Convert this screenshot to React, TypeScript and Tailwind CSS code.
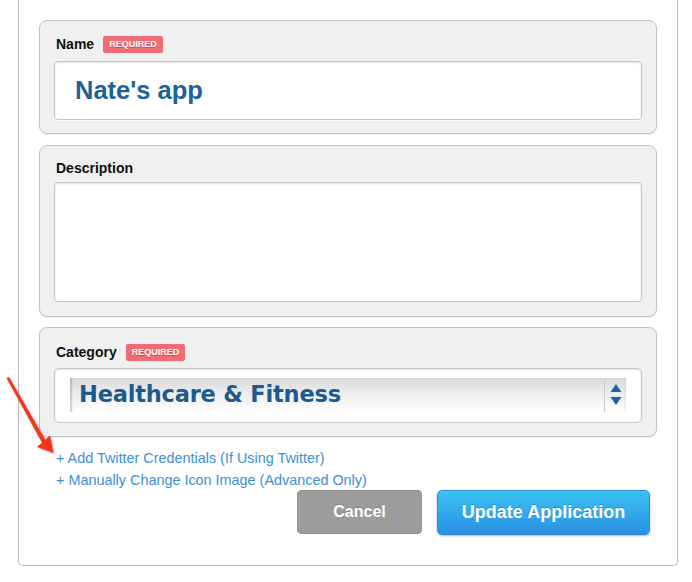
import React from "react";

function Badge() {
  return (
    <span className="ml-[9px] inline-flex h-[17px] items-center rounded-[2px] bg-[#f06c74] px-[6px] text-[9px] font-bold leading-none text-white [text-shadow:0_1px_0_rgba(150,30,40,0.45)]">
      REQUIRED
    </span>
  );
}

function Card({ children, className }: { children: React.ReactNode; className: string }) {
  return (
    <div
      className={
        "rounded-[8px] border border-[#c3c3c3] bg-[#f0f0f0] px-[14px] shadow-[0_1px_1px_rgba(0,0,0,0.06)] " +
        className
      }
    >
      {children}
    </div>
  );
}

export default function App() {
  return (
    <div className="relative h-[582px] w-[692px] bg-white font-['Liberation_Sans',Arial,sans-serif]">
      <div className="ml-[18px] h-[566px] w-[660px] rounded-b-[5px] border-x border-b border-[#b8b8b8] px-[20px] pt-[20px]">
        {/* Name */}
        <Card className="pt-[15px] pb-[13px]">
          <div className="flex h-[16px] items-center pl-[2px]">
            <span className="text-[14px] font-bold text-[#111]">Name</span>
            <Badge />
          </div>
          <div className="mt-[9px] flex h-[59px] items-center rounded-[4px] border border-[#c6c6c6] bg-white pl-[20px] shadow-[inset_0_1px_2px_rgba(0,0,0,0.12),0_1px_0_rgba(255,255,255,0.8)]">
            <span className="text-[25.5px] font-bold text-[#1c6399]">Nate's app</span>
          </div>
        </Card>

        {/* Description */}
        <Card className="mt-[11px] pt-[14px] pb-[14px]">
          <div className="flex h-[16px] items-center pl-[2px]">
            <span className="text-[14px] font-bold text-[#111]">Description</span>
          </div>
          <div className="mt-[6px] h-[120px] rounded-[4px] border border-[#c6c6c6] bg-white shadow-[inset_0_1px_2px_rgba(0,0,0,0.12)]" />
        </Card>

        {/* Category */}
        <Card className="mt-[10px] pt-[16px] pb-[13px]">
          <div className="flex h-[16px] items-center pl-[2px]">
            <span className="text-[14px] font-bold text-[#111]">Category</span>
            <Badge />
          </div>
          <div className="mt-[8px] h-[55px] rounded-[5px] border border-[#c6c6c6] bg-white px-[15px] pt-[9px] shadow-[inset_0_1px_2px_rgba(0,0,0,0.12)]">
            <div className="flex h-[34px] items-center bg-[linear-gradient(to_bottom,#dadada,#ececec_45%,#fafafa_85%,#ffffff)] shadow-[inset_3px_0_2px_-1px_rgba(0,0,0,0.18),inset_-3px_0_3px_-2px_rgba(0,0,0,0.08)]">
              <span className="flex-1 pl-[9px] font-['DejaVu_Sans',sans-serif] text-[22.5px] font-bold tracking-[-0.2px] text-[#1d5b8f]">
                Healthcare &amp; Fitness
              </span>
              <div className="flex h-full w-[22px] items-center justify-center border-l border-[#cbcbcb]">
                <svg width="12" height="22" viewBox="0 0 12 22">
                  <path d="M6 0 L11.5 8 L0.5 8 Z" fill="#1f65a2" />
                  <path d="M0.5 13 L11.5 13 L6 21 Z" fill="#1f65a2" />
                </svg>
              </div>
            </div>
          </div>
        </Card>

        {/* Links */}
        <div className="mt-[10px] pl-[17px] text-[14.4px] leading-[22px] text-[#3d8fd8]">
          <div>+ Add Twitter Credentials (If Using Twitter)</div>
          <div>+ Manually Change Icon Image (Advanced Only)</div>
        </div>

        {/* Buttons */}
        <div className="mt-[-1px] flex justify-end gap-[15px] pr-[7px]">
          <button className="h-[44px] w-[125px] rounded-[4px] border border-[#939393] bg-[#9c9c9c] text-[16px] font-bold text-white [text-shadow:0_-1px_0_rgba(0,0,0,0.15)]">
            Cancel
          </button>
          <button className="h-[45px] w-[213px] rounded-[5px] border border-[#2c8ad6] bg-[linear-gradient(to_bottom,#3ac3f3,#2b8fe2)] text-[18px] font-bold text-white shadow-[0_1px_2px_rgba(0,0,0,0.3)] [text-shadow:0_-1px_0_rgba(0,60,120,0.3)]">
            Update Application
          </button>
        </div>
      </div>

      {/* Red annotation arrow */}
      <svg className="absolute left-0 top-[370px]" width="70" height="95" viewBox="0 370 70 95">
        <defs>
          <filter id="sh" x="-30%" y="-30%" width="160%" height="160%">
            <feDropShadow dx="1" dy="1" stdDeviation="1" floodColor="#000" floodOpacity="0.35" />
          </filter>
        </defs>
        <g filter="url(#sh)" fill="#f2351d">
          <path d="M6.5 378 L9 377 L46 441 L42.5 443.5 Z" />
          <path d="M37 447 L50 435.5 L53.5 453 Z" />
        </g>
      </svg>
    </div>
  );
}
